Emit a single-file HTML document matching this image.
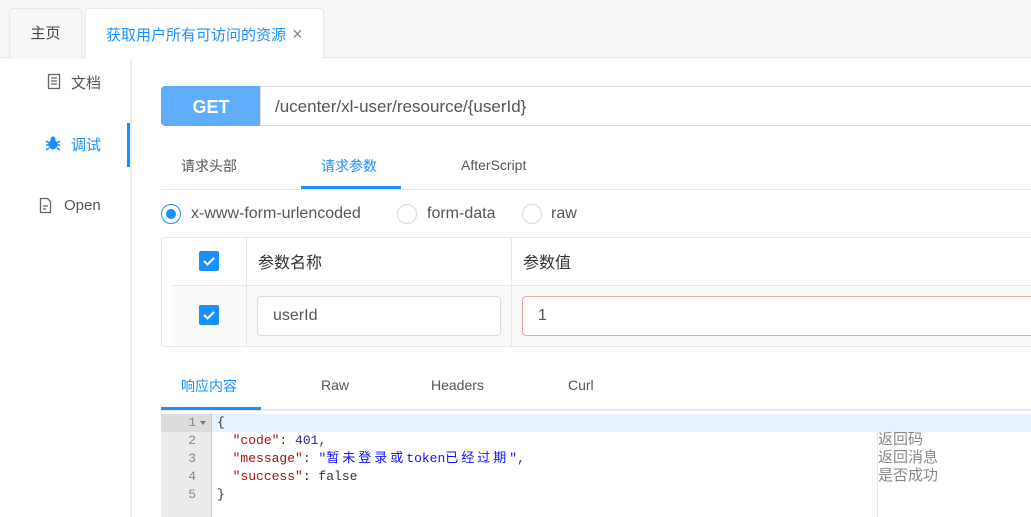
<!DOCTYPE html>
<html><head><meta charset="utf-8"><style>
*{margin:0;padding:0;box-sizing:border-box}
body{width:1031px;height:517px;overflow:hidden;background:#fff;font-family:"Liberation Sans","Noto Sans CJK SC",sans-serif;position:relative;color:#555}
.a{position:absolute}
.mono{font-family:"Liberation Mono","Noto Sans CJK SC",monospace;font-size:13px}
.cj{letter-spacing:3px}
</style></head><body>
<div class="a" style="left:0;top:0;width:1031px;height:58px;background:#f5f6f7;border-bottom:1px solid #e8e8e8"></div>
<div class="a" style="left:9px;top:8px;width:73px;height:51px;background:#f7f7f7;border:1px solid #e8e8e8;border-bottom:none;border-radius:4px 4px 0 0;font-size:15px;color:#444;text-align:center;line-height:50px">主页</div>
<div class="a" style="left:85px;top:8px;width:239px;height:51px;background:#fff;border:1px solid #e8e8e8;border-bottom:none;border-radius:4px 4px 0 0;font-size:15px;color:#1890ff;line-height:50px;padding-left:20px">获取用户所有可访问的资源 <span style="color:#888;font-size:18px;margin-left:2px">×</span></div>

<div class="a" style="left:130px;top:60px;width:2px;height:457px;background:#ececec"></div>
<div class="a" style="left:127px;top:123px;width:3px;height:44px;background:#1890ff"></div>
<svg class="a" style="left:47px;top:73px" width="14" height="17" viewBox="0 0 14 17"><rect x="1.5" y="1.5" width="11" height="14" fill="none" stroke="#666" stroke-width="1.3"/><path d="M4 5h6M4 8h6M4 11h6" stroke="#666" stroke-width="1.2"/></svg>
<div class="a" style="left:71px;top:72px;font-size:15px;color:#555">文档</div>
<svg class="a" style="left:45px;top:135px" width="16" height="16" viewBox="0 0 16 16"><ellipse cx="8" cy="9.5" rx="4.5" ry="5" fill="#1890ff"/><circle cx="8" cy="4" r="2.5" fill="#1890ff"/><path d="M1 6l3 2M15 6l-3 2M1 10h3M15 10h-3M1 15l3-2M15 15l-3-2" stroke="#1890ff" stroke-width="1.5"/></svg>
<div class="a" style="left:71px;top:134px;font-size:15px;color:#1890ff">调试</div>
<svg class="a" style="left:39px;top:197px" width="13" height="17" viewBox="0 0 13 17"><path d="M1.5 1.5h7l3 3v11h-10z" fill="none" stroke="#666" stroke-width="1.3"/><path d="M4 9h5M4 12h3" stroke="#666" stroke-width="1.2"/></svg>
<div class="a" style="left:64px;top:197px;font-size:15px;color:#555">Open</div>

<div class="a" style="left:161px;top:86px;width:100px;height:40px;background:#61adfd;border-radius:4px 0 0 4px;color:#fff;font-weight:bold;font-size:18px;text-align:center;line-height:42px">GET</div>
<div class="a" style="left:260px;top:86px;width:780px;height:40px;border:1px solid #dcdcdc;font-size:17px;color:#555;line-height:40px;padding-left:14px">/ucenter/xl-user/resource/{userId}</div>

<div class="a" style="left:181px;top:156px;font-size:14px;color:#555">请求头部</div>
<div class="a" style="left:321px;top:156px;font-size:14px;color:#1890ff">请求参数</div>
<div class="a" style="left:461px;top:157px;font-size:14px;color:#555">AfterScript</div>
<div class="a" style="left:161px;top:189px;width:870px;height:1px;background:#e8e8e8"></div>
<div class="a" style="left:301px;top:186px;width:100px;height:3px;background:#1890ff"></div>

<div class="a" style="left:161px;top:204px;width:20px;height:20px;border:1px solid #1890ff;border-radius:50%"></div>
<div class="a" style="left:166px;top:209px;width:10px;height:10px;background:#1890ff;border-radius:50%"></div>
<div class="a" style="left:191px;top:205px;font-size:16px;color:#555">x-www-form-urlencoded</div>
<div class="a" style="left:397px;top:204px;width:20px;height:20px;border:1px solid #d9d9d9;border-radius:50%"></div>
<div class="a" style="left:427px;top:205px;font-size:16px;color:#555">form-data</div>
<div class="a" style="left:522px;top:204px;width:20px;height:20px;border:1px solid #d9d9d9;border-radius:50%"></div>
<div class="a" style="left:551px;top:205px;font-size:16px;color:#555">raw</div>

<div class="a" style="left:161px;top:237px;width:880px;height:110px;border:1px solid #e8e8e8;border-radius:4px"></div>
<div class="a" style="left:172px;top:285px;width:860px;height:61px;background:#fafafa;border-top:1px solid #e8e8e8"></div>
<div class="a" style="left:246px;top:238px;width:1px;height:108px;background:#e8e8e8"></div>
<div class="a" style="left:511px;top:238px;width:1px;height:108px;background:#e8e8e8"></div>
<div class="a" style="left:199px;top:251px;width:20px;height:20px;background:#1890ff;border-radius:2px"></div>
<svg class="a" style="left:199px;top:251px" width="20" height="20"><path d="M5 10l3.5 3.5L15 7" fill="none" stroke="#fff" stroke-width="2"/></svg>
<div class="a" style="left:199px;top:305px;width:20px;height:20px;background:#1890ff;border-radius:2px"></div>
<svg class="a" style="left:199px;top:305px" width="20" height="20"><path d="M5 10l3.5 3.5L15 7" fill="none" stroke="#fff" stroke-width="2"/></svg>
<div class="a" style="left:258px;top:249px;font-size:16px;color:#333">参数名称</div>
<div class="a" style="left:523px;top:249px;font-size:16px;color:#333">参数值</div>
<div class="a" style="left:257px;top:296px;width:244px;height:40px;background:#fff;border:1px solid #dcdcdc;border-radius:4px;font-size:16px;color:#555;line-height:38px;padding-left:15px">userId</div>
<div class="a" style="left:522px;top:296px;width:520px;height:40px;background:#fff;border:1px solid #eba5a5;border-radius:4px;font-size:16px;color:#555;line-height:38px;padding-left:15px">1</div>

<div class="a" style="left:181px;top:376px;font-size:14px;color:#1890ff">响应内容</div>
<div class="a" style="left:321px;top:377px;font-size:14px;color:#555">Raw</div>
<div class="a" style="left:431px;top:377px;font-size:14px;color:#555">Headers</div>
<div class="a" style="left:568px;top:377px;font-size:14px;color:#555">Curl</div>
<div class="a" style="left:161px;top:409px;width:870px;height:2px;background:#e8e8e8"></div>
<div class="a" style="left:161px;top:407px;width:100px;height:3px;background:#1890ff"></div>

<div class="a" style="left:161px;top:414px;width:50px;height:103px;background:#ebebeb"></div>
<div class="a" style="left:161px;top:414px;width:50px;height:18px;background:#dcdcdc"></div>
<div class="a" style="left:211px;top:414px;width:1px;height:103px;background:#c8c8c8"></div>
<div class="a" style="left:212px;top:414px;width:819px;height:18px;background:#e8f2fe"></div>
<div class="a" style="left:877px;top:432px;width:1px;height:85px;background:#e8e8e8"></div>
<div class="a mono" style="left:161px;top:414px;width:35px;text-align:right;line-height:18px;color:#888">1<br>2<br>3<br>4<br>5</div>
<div class="a" style="left:200px;top:421px;border-left:3px solid transparent;border-right:3px solid transparent;border-top:4px solid #777"></div>
<div class="a mono" style="left:217px;top:414px;line-height:18px;color:#333;white-space:pre">{
  <span style="color:#a11">"code"</span>: <span style="color:#229">401</span>,
  <span style="color:#a11">"message"</span>: <span style="color:#11f">"<span class="cj">暂未登录或</span>token<span class="cj">已经过期</span>"</span>,
  <span style="color:#a11">"success"</span>: false
}</div>
<div class="a mono" style="left:878px;top:432px;line-height:18px;color:#888;font-size:15px">返回码<br>返回消息<br>是否成功</div>
</body></html>
